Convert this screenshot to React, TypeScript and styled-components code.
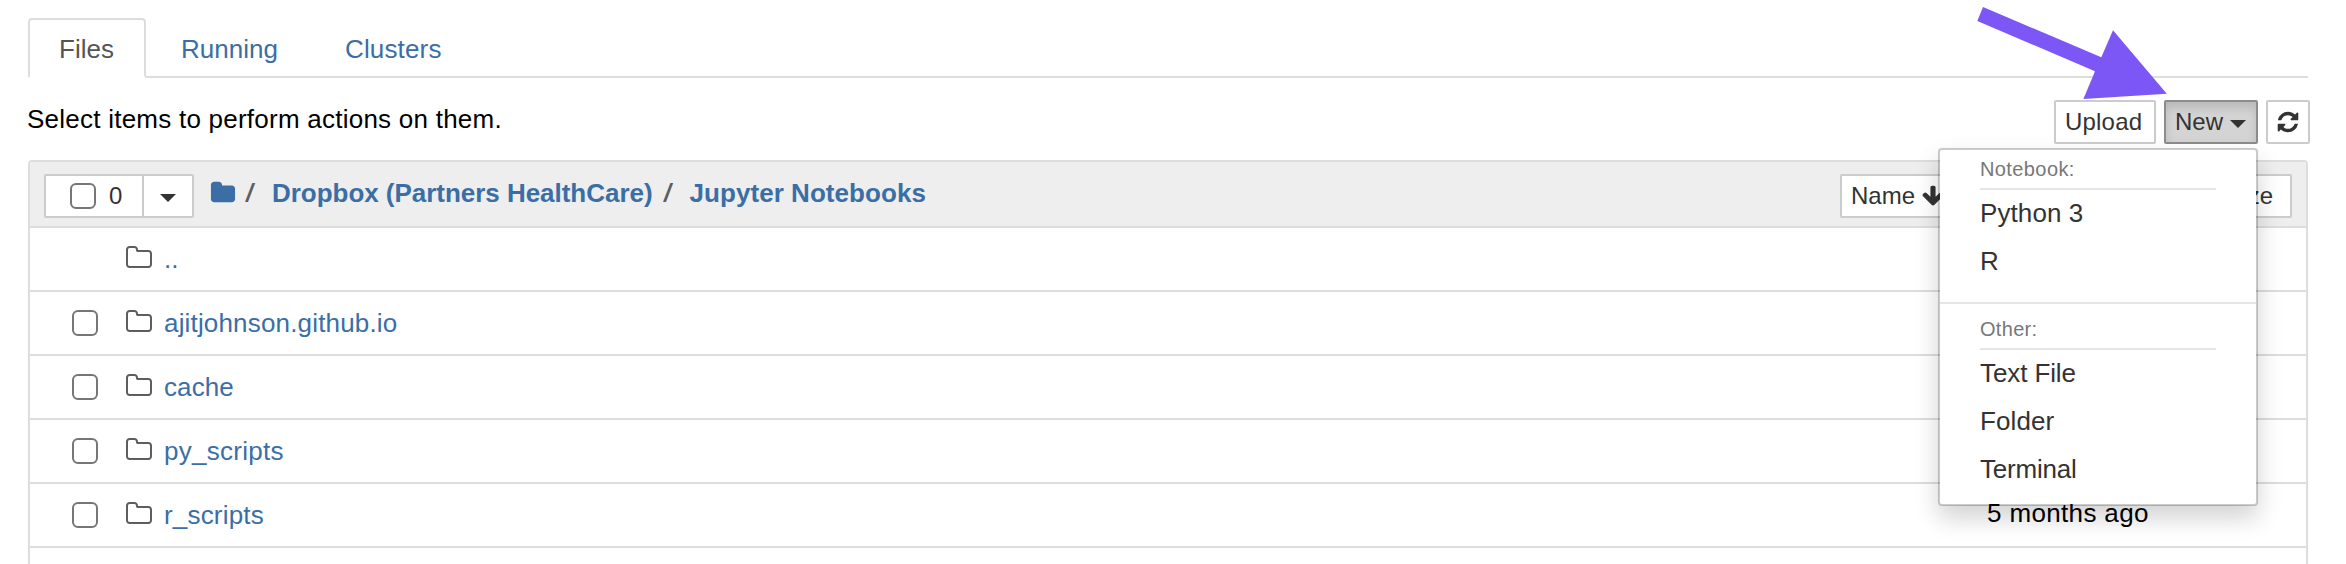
import React from "react";
import styled, { createGlobalStyle } from "styled-components";

const GlobalStyle = createGlobalStyle`
  * { box-sizing: border-box; }
  body {
    margin: 0;
    background: #fff;
    color: #000;
    font: 26px/37px "Liberation Sans", Arial, sans-serif;
    overflow: hidden;
  }
`;

const Page = styled.main`
  position: relative;
  width: 2346px;
  height: 564px;
  overflow: hidden;
  padding: 18px 38px 0 28px;
`;

const Label = styled.span<{ $track?: number }>`
  letter-spacing: ${(p) => p.$track ?? 0}px;
  white-space: pre;
`;

const Tabs = styled.nav`
  display: flex;
  gap: 4px;
  height: 60px;
  border-bottom: 2px solid #ddd;
`;

const Tab = styled.a<{ $active?: boolean; $width: number }>`
  width: ${(p) => p.$width}px;
  height: 60px;
  padding: 11px 0 0 29px;
  border: 2px solid ${(p) => (p.$active ? "#ddd" : "transparent")};
  border-bottom-color: ${(p) => (p.$active ? "#fff" : "transparent")};
  border-radius: 4px 4px 0 0;
  background: ${(p) => (p.$active ? "#fff" : "transparent")};
  color: ${(p) => (p.$active ? "#555" : "#3b6ea5")};
`;

const Toolbar = styled.div`
  display: flex;
  justify-content: space-between;
  height: 82px;
  padding-top: 22px;
  margin-right: -2px;
`;

const Hint = styled.p`
  margin: 1px 0 0 -1px;
`;

const Actions = styled.div`
  position: relative;
  display: flex;
  gap: 8px;
`;

const Button = styled.button<{ $width?: number; $active?: boolean }>`
  display: flex;
  align-items: center;
  flex: none;
  width: ${(p) => (p.$width ? `${p.$width}px` : "auto")};
  height: 44px;
  margin: 0;
  padding: 0 9px;
  border: 2px solid ${(p) => (p.$active ? "#8c8c8c" : "#ccc")};
  border-radius: 2px;
  background: ${(p) => (p.$active ? "#d4d4d4" : "#fff")};
  box-shadow: ${(p) => (p.$active ? "inset 0 6px 10px rgba(0,0,0,.125)" : "none")};
  color: #333;
  font: 24px/36px "Liberation Sans", Arial, sans-serif;
  white-space: nowrap;
`;

const Caret = styled.i`
  width: 0;
  height: 0;
  margin: 4px 0 0 7px;
  border: 8px solid transparent;
  border-top-color: #333;
  border-bottom: 0;
`;

const Menu = styled.div`
  position: absolute;
  z-index: 2;
  top: 48px;
  right: 52px;
  width: 320px;
  height: 358px;
  border: 2px solid rgba(0, 0, 0, 0.2);
  border-radius: 4px;
  background: #fff;
  background-clip: padding-box;
  box-shadow: 0 12px 24px rgba(0, 0, 0, 0.175);
`;

const MenuHeading = styled.div`
  height: 40px;
  margin: 0 40px;
  padding-top: 2px;
  border-bottom: 2px solid #e5e5e5;
  color: #777;
  font-size: 20px;
  line-height: 34px;
`;

const MenuItem = styled.div`
  height: 48px;
  padding: 5px 40px;
  color: #333;
`;

const MenuDivider = styled.div`
  height: 2px;
  margin: 16px 0 6px;
  background: #e5e5e5;
`;

const List = styled.section`
  height: 500px;
  border: 2px solid #ddd;
  border-radius: 4px 4px 0 0;
`;

const ListHeader = styled.header`
  display: flex;
  height: 66px;
  padding: 12px 14px;
  border-bottom: 2px solid #ddd;
  border-radius: 2px 2px 0 0;
  background: #eee;
`;

const SelectButton = styled(Button)`
  padding: 0 0 0 24px;
  border-radius: 2px 0 0 2px;
  gap: 13px;
`;

const SelectToggle = styled(Button)`
  margin-left: -2px;
  padding: 0 0 0 9px;
  border-radius: 0 2px 2px 0;
`;

const Checkbox = styled.span`
  flex: none;
  width: 26px;
  height: 26px;
  border: 2px solid #767676;
  border-radius: 6px;
  background: #fff;
`;

const Crumbs = styled.div`
  display: flex;
  flex: 1;
  height: 37px;
  margin-left: 17px;
  margin-top: 1px;
  color: #3b6ea5;
  font-weight: bold;
`;

const Slash = styled.span`
  width: 14px;
  margin: 0 13px 0 10px;
  color: #5e5e5e;
  font-weight: normal;
  transform: scaleX(1.4);
  transform-origin: left;
`;

const Icon = styled.svg<{ $size: number }>`
  display: block;
  flex: none;
  width: ${(p) => p.$size}px;
  height: ${(p) => p.$size}px;
  fill: currentColor;
`;

const HomeIcon = styled(Icon)`
  margin: 5px -1px 0 -1px;
`;

const SortArrow = styled(Icon)`
  margin: 0 0 1px 6px;
`;

const RefreshIcon = styled(Icon)`
  margin: -1px 0 0 -1px;
`;

const SortButtons = styled.div`
  display: flex;
  gap: 8px;
`;

const Row = styled.div`
  display: flex;
  height: 64px;
  border-bottom: 2px solid #ddd;
`;

const RowCheck = styled.div`
  width: 95px;
  padding: 18px 0 0 42px;
`;

const RowIcon = styled.div`
  width: 39px;
  padding-top: 16px;
  color: #5e5e5e;
`;

const RowName = styled.a`
  flex: 1;
  padding-top: 13px;
  color: #3b6ea5;
`;

const RowDate = styled.span`
  width: 319px;
  padding-top: 11px;
`;

const Pointer = styled.svg`
  position: absolute;
  z-index: 3;
  left: 1970px;
  top: 0;
  width: 200px;
  height: 104px;
  fill: #7d57f6;
`;

const paths = {
  folder:
    "M1728 608v704q0 92-66 158t-158 66h-1216q-92 0-158-66t-66-158v-960q0-92 66-158t158-66h320q92 0 158 66t66 158v32h672q92 0 158 66t66 158z",
  folderOutline:
    "M1600 1312v-704q0-40-28-68t-68-28h-704q-40 0-68-28t-28-68v-64q0-40-28-68t-68-28h-320q-40 0-68 28t-28 68v960q0 40 28 68t68 28h1216q40 0 68-28t28-68zm128-704v704q0 92-66 158t-158 66h-1216q-92 0-158-66t-66-158v-960q0-92 66-158t158-66h320q92 0 158 66t66 158v32h672q92 0 158 66t66 158z",
  arrowDown:
    "M1675 832q0 53-37 90l-651 652q-39 37-91 37-53 0-90-37l-651-652q-38-36-38-90 0-53 38-91l74-75q39-37 91-37 53 0 90 37l294 294v-704q0-52 38-90t90-38h128q52 0 90 38t38 90v704l294-294q37-37 90-37 52 0 91 37l75 75q37 39 37 91z",
  refresh:
    "M1639 1056q0 5-1 7-64 268-268 434.5t-478 166.5q-146 0-282.5-55t-243.5-157l-129 129q-19 19-45 19t-45-19-19-45v-448q0-26 19-45t45-19h448q26 0 45 19t19 45-19 45l-137 137q71 66 161 102t187 36q134 0 250-65t186-179q11-17 53-117 8-23 30-23h192q13 0 22.5 9.5t9.5 22.5zm25-800v448q0 26-19 45t-45 19h-448q-26 0-45-19t-19-45 19-45l138-138q-148-137-349-137-134 0-250 65t-186 179q-11 17-53 117-8 23-30 23h-199q-13 0-22.5-9.5t-9.5-22.5v-7q65-268 270-434.5t480-166.5q146 0 284 55.5t245 156.5l130-129q19-19 45-19t45 19 19 45z",
};

interface Entry {
  name: string;
  track: number;
  parent?: boolean;
  date?: string;
}

const entries: Entry[] = [
  { name: "..", track: 0, parent: true },
  { name: "ajitjohnson.github.io", track: 0.17 },
  { name: "cache", track: 0.1 },
  { name: "py_scripts", track: 0.28 },
  { name: "r_scripts", track: 0.18, date: "5 months ago" },
];

export default function App() {
  return (
    <Page>
      <GlobalStyle />
      <Tabs>
        <Tab $active $width={118}><Label>Files</Label></Tab>
        <Tab $width={160}><Label>Running</Label></Tab>
        <Tab $width={160}><Label $track={0.15}>Clusters</Label></Tab>
      </Tabs>

      <Toolbar>
        <Hint><Label $track={0.24}>Select items to perform actions on them.</Label></Hint>
        <Actions>
          <Button $width={102}><Label $track={0.2}>Upload</Label></Button>
          <Button $width={94} $active><Label>New</Label><Caret /></Button>
          <Button $width={44}>
            <RefreshIcon $size={24} viewBox="0 0 1792 1792"><path d={paths.refresh} /></RefreshIcon>
          </Button>
          <Menu>
            <MenuHeading><Label $track={0.4}>Notebook:</Label></MenuHeading>
            <MenuItem><Label $track={0.1}>Python 3</Label></MenuItem>
            <MenuItem><Label>R</Label></MenuItem>
            <MenuDivider />
            <MenuHeading><Label $track={0.3}>Other:</Label></MenuHeading>
            <MenuItem><Label $track={-0.1}>Text File</Label></MenuItem>
            <MenuItem><Label $track={0.1}>Folder</Label></MenuItem>
            <MenuItem><Label $track={-0.2}>Terminal</Label></MenuItem>
          </Menu>
        </Actions>
      </Toolbar>

      <List>
        <ListHeader>
          <SelectButton $width={100}><Checkbox /><Label>0</Label></SelectButton>
          <SelectToggle $width={52}><Caret /></SelectToggle>
          <Crumbs>
            <HomeIcon $size={26} viewBox="0 0 1792 1792"><path d={paths.folder} /></HomeIcon>
            <Slash>/</Slash>
            <Label $track={-0.03}>Dropbox (Partners HealthCare)</Label>
            <Slash>/</Slash>
            <Label $track={0.05}>Jupyter Notebooks</Label>
          </Crumbs>
          <SortButtons>
            <Button $width={116}>
              <Label>Name</Label>
              <SortArrow $size={24} viewBox="0 0 1792 1792"><path d={paths.arrowDown} /></SortArrow>
            </Button>
            <Button $width={202}>Last Modified</Button>
            <Button $width={118}><Label>File size</Label></Button>
          </SortButtons>
        </ListHeader>
        {entries.map((entry) => (
          <Row key={entry.name}>
            <RowCheck>{!entry.parent && <Checkbox as="div" />}</RowCheck>
            <RowIcon>
              <Icon $size={28} viewBox="0 0 1792 1792"><path d={paths.folderOutline} /></Icon>
            </RowIcon>
            <RowName><Label $track={entry.track}>{entry.name}</Label></RowName>
            {entry.date && <RowDate><Label $track={0.35}>{entry.date}</Label></RowDate>}
          </Row>
        ))}
      </List>

      <Pointer viewBox="1970 0 200 104">
        <path d="M1983 7 2101.3 57.3 2113 30.2 2166.8 93.8 2083.4 99 2095 71.2 1977.3 21z" />
      </Pointer>
    </Page>
  );
}
